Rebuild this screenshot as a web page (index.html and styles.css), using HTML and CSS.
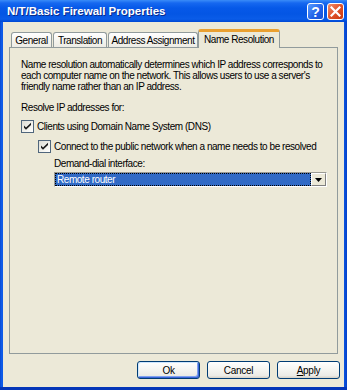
FILE: index.html
```html
<!DOCTYPE html>
<html>
<head>
<meta charset="utf-8">
<link rel="stylesheet" href="styles.css">
</head>
<body>
<div class="window">
  <div class="titlebar">
    <span class="title">N/T/Basic Firewall Properties</span>
    <div class="tbtns">
      <span class="tb help">?</span>
      <span class="tb close"><svg width="11" height="11" viewBox="0 0 11 11"><path d="M1.5 1.5 L9.5 9.5 M9.5 1.5 L1.5 9.5" stroke="#fff" stroke-width="2.2" stroke-linecap="square"/></svg></span>
    </div>
  </div>
  <div class="body">
    <div class="tabs">
      <div class="tab t1">General</div>
      <div class="tab t2">Translation</div>
      <div class="tab t3">Address Assignment</div>
      <div class="tab active">Name Resolution</div>
    </div>
    <div class="panel">
      <p class="desc">Name resolution automatically determines which IP address corresponds to<br>each computer name on the network. This allows users to use a server's<br>friendly name rather than an IP address.</p>
      <p class="label">Resolve IP addresses for:</p>
      <div class="check">
        <span class="box"><svg width="13" height="13" viewBox="0 0 13 13"><path d="M3 5.5 L5 7.5 L10 2.8 L10 5 L5 9.8 L3 7.8 Z" fill="#1a1a1a"/></svg></span>
        <span>Clients using Domain Name System (DNS)</span>
      </div>
      <div class="check sub">
        <span class="box"><svg width="13" height="13" viewBox="0 0 13 13"><path d="M3 5.5 L5 7.5 L10 2.8 L10 5 L5 9.8 L3 7.8 Z" fill="#1a1a1a"/></svg></span>
        <span>Connect to the public network when a name needs to be resolved</span>
      </div>
      <p class="label sub2 dd">Demand-dial interface:</p>
      <div class="select sub2">
        <div class="field"><span class="val">Remote router</span></div>
        <div class="arrow"><svg width="7" height="4" viewBox="0 0 7 4"><path d="M0 0 H7 L3.5 4 Z" fill="#000"/></svg></div>
      </div>
    </div>
    <div class="footer">
      <button class="btn default">Ok</button>
      <button class="btn">Cancel</button>
      <button class="btn"><u>A</u>pply</button>
    </div>
  </div>
</div>
</body>
</html>
```
FILE: styles.css
```css
html, body {
  margin: 0;
  padding: 0;
  background: #0a54e0;
}
.window {
  width: 347px;
  height: 390px;
  display: flex;
  flex-direction: column;
  background: linear-gradient(to right, #0848d0 0, #1060ee 2px, #0a54e0 3px, #0a54e0 344px, #0440c8 347px);
  font-family: "Liberation Sans", Arial, sans-serif;
  font-size: 10px;
  letter-spacing: -0.45px;
  color: #000;
  box-sizing: border-box;
  border-bottom: 3px solid #0436b8;
}
.titlebar {
  height: 22px;
  flex: none;
  display: flex;
  align-items: center;
  justify-content: space-between;
  padding: 0 3px 0 7px;
  background: linear-gradient(#3a8cf8 0, #1668f0 3px, #0659e8 8px, #0456e4 14px, #0a5ce8 19px, #0048d4 22px);
}
.title {
  color: #fff;
  font-weight: bold;
  font-size: 11.5px;
  letter-spacing: 0;
  text-shadow: 1px 1px 0 #0a2a8a;
}
.tbtns {
  display: flex;
  gap: 3px;
  align-self: flex-start;
  margin-top: 3px;
}
.tb {
  width: 17px;
  height: 17px;
  box-sizing: border-box;
  border: 1px solid #fff;
  border-radius: 3px;
  display: flex;
  align-items: center;
  justify-content: center;
  color: #fff;
}
.help {
  background: linear-gradient(135deg, #5a9cff, #2060e8 60%, #1a50d0);
  font-weight: bold;
  font-size: 14px;
  letter-spacing: 0;
  font-family: "Liberation Sans", Arial, sans-serif;
}
.close {
  background: linear-gradient(135deg, #f09070, #e0532b 50%, #c83810);
}
.body {
  flex: 1;
  margin: 0 3px;
  background: #ece9d8;
  padding: 8px 6px 0 6px;
  display: flex;
  flex-direction: column;
}
.tabs {
  display: flex;
  align-items: flex-end;
  height: 18px;
  padding-left: 2px;
  margin-bottom: -1px;
}
.tab {
  height: 16px;
  box-sizing: border-box;
  border: 1px solid #919b9c;
  border-bottom: none;
  border-radius: 3px 3px 0 0;
  background: linear-gradient(#ffffff, #f3f2ec 60%, #ecebe4);
  padding: 0 5px;
  display: flex;
  align-items: center;
  margin-right: 1px;
  white-space: nowrap;
}
.t1 { width: 41px; justify-content: center; padding: 0; }
.t2 { width: 54px; justify-content: center; padding: 0; }
.t3 { width: 90px; justify-content: center; padding: 0; margin-right: 0; }
.tab.active {
  position: relative;
  z-index: 1;
  height: 19px;
  width: 82px;
  padding: 0 0 2px 0;
  justify-content: center;
  background: #ece9d8;
  border-top: 3px solid #eaa030;
}
.panel {
  height: 307px;
  box-sizing: border-box;
  border: 1px solid #919b9c;
  background: #ece9d8;
  padding: 11px 0 0 11px;
}
p {
  margin: 0;
}
.desc {
  line-height: 11px;
  white-space: nowrap;
}
.label {
  line-height: 11px;
  margin-top: 10px;
  white-space: nowrap;
}
.check {
  display: flex;
  align-items: center;
  height: 13px;
  margin-top: 7px;
  white-space: nowrap;
}
.check.sub {
  margin-left: 17px;
  margin-top: 7px;
}
.box {
  width: 13px;
  height: 13px;
  box-sizing: border-box;
  border: 1px solid #50667c;
  background: linear-gradient(135deg, #dcdcd4, #f6f6f2 70%, #ffffff);
  margin-right: 3px;
  position: relative;
  flex: none;
}
.box svg {
  position: absolute;
  left: -1px;
  top: -1px;
}
.sub2 {
  margin-left: 33px;
}
.dd {
  margin-top: 5px;
}
.select {
  margin-top: 3px;
  width: 273px;
  height: 15px;
  box-sizing: border-box;
  border-top: 1px solid #9a9a92;
  border-left: 1px solid #9a9a92;
  border-right: 1px solid #ffffff;
  border-bottom: 1px solid #ffffff;
  display: flex;
  background: #fff;
}
.field {
  flex: 1;
  background: #316ac5;
  border: 1px dotted #e8a028;
  outline: 1px dotted #000;
  outline-offset: -1px;
  display: flex;
  align-items: center;
  color: #fff;
  padding-left: 1px;
}
.val {
  line-height: 11px;
}
.arrow {
  width: 15px;
  flex: none;
  box-sizing: border-box;
  background: #ece9d8;
  border-top: 1px solid #ffffff;
  border-left: 1px solid #ffffff;
  border-right: 1px solid #808080;
  border-bottom: 1px solid #808080;
  display: flex;
  align-items: center;
  justify-content: center;
}
.footer {
  display: flex;
  justify-content: flex-end;
  gap: 7px;
  margin-top: 7px;
  margin-right: -2px;
}
.btn {
  width: 63px;
  height: 18px;
  box-sizing: border-box;
  border: 1px solid #003c74;
  border-radius: 3px;
  background: linear-gradient(#ffffff, #f4f4f0 50%, #ecebe6 85%, #d6d0c5);
  font-family: "Liberation Sans", Arial, sans-serif;
  font-size: 10px;
  letter-spacing: -0.3px;
  color: #000;
  padding: 0;
  display: flex;
  align-items: center;
  justify-content: center;
}
.btn.default {
  box-shadow: inset -1px -1px 0 #3c64d8, inset 1px 1px 0 #cee7ff, inset -2px -2px 0 #7ea2ee;
}
```
